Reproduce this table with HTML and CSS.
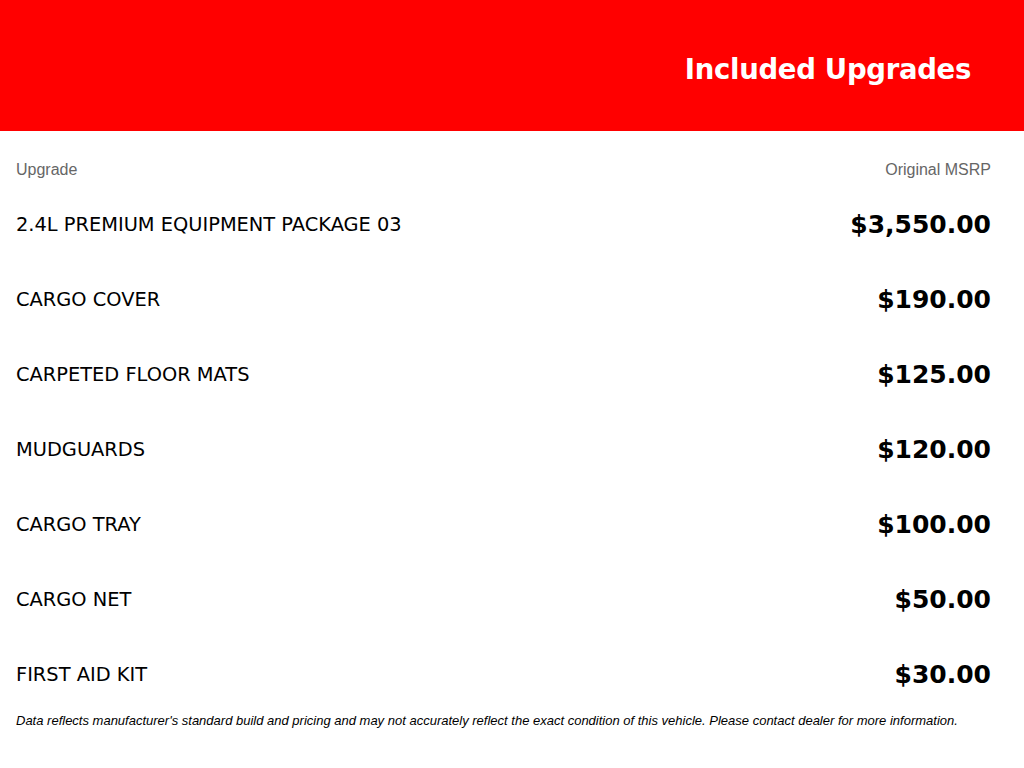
FILE: index.html
```html
<!DOCTYPE html>
<html lang="en">
<head>
<meta charset="utf-8">
<title>Included Upgrades</title>
<link rel="stylesheet" href="styles.css">
</head>
<body>
<header class="banner">
  <h1 class="banner-title">Included Upgrades</h1>
</header>
<main class="content">
  <div class="table-head">
    <span>Upgrade</span>
    <span>Original MSRP</span>
  </div>
  <ul class="rows">
    <li class="row"><span class="name">2.4L PREMIUM EQUIPMENT PACKAGE 03</span><span class="price">$3,550.00</span></li>
    <li class="row"><span class="name">CARGO COVER</span><span class="price">$190.00</span></li>
    <li class="row"><span class="name">CARPETED FLOOR MATS</span><span class="price">$125.00</span></li>
    <li class="row"><span class="name">MUDGUARDS</span><span class="price">$120.00</span></li>
    <li class="row"><span class="name">CARGO TRAY</span><span class="price">$100.00</span></li>
    <li class="row"><span class="name">CARGO NET</span><span class="price">$50.00</span></li>
    <li class="row"><span class="name">FIRST AID KIT</span><span class="price">$30.00</span></li>
  </ul>
  <p class="disclaimer">Data reflects manufacturer's standard build and pricing and may not accurately reflect the exact condition of this vehicle. Please contact dealer for more information.</p>
</main>
</body>
</html>
```

FILE: styles.css
```css
* { box-sizing: border-box; }
html, body { margin: 0; padding: 0; background: #fff; }
body { font-family: "Liberation Sans", Arial, sans-serif; color: #000; }

.banner {
  background: #ff0000;
  height: 131px;
  display: flex;
  align-items: center;
  justify-content: flex-end;
  padding: 6px 53px 0 16px;
}
.banner-title {
  margin: 0;
  color: #fff;
  font-family: "DejaVu Sans", sans-serif;
  font-weight: 700;
  font-size: 27.5px;
  letter-spacing: -0.3px;
}

.content { padding: 0 33px 0 16px; }

.table-head {
  display: flex;
  justify-content: space-between;
  color: #666;
  font-size: 16px;
  padding-top: 30px;
  height: 70px;
}

.rows { list-style: none; margin: 0; padding: 0; }
.row {
  display: flex;
  justify-content: space-between;
  align-items: center;
  height: 75px;
}
.row:first-child { margin-top: -14px; }
.name {
  font-family: "DejaVu Sans", sans-serif;
  font-size: 19.4px;
}
.price {
  font-family: "DejaVu Sans", sans-serif;
  font-weight: 700;
  font-size: 25px;
}

.disclaimer {
  margin: 0;
  padding-top: 1px;
  font-size: 13px;
  font-style: italic;
}
```
